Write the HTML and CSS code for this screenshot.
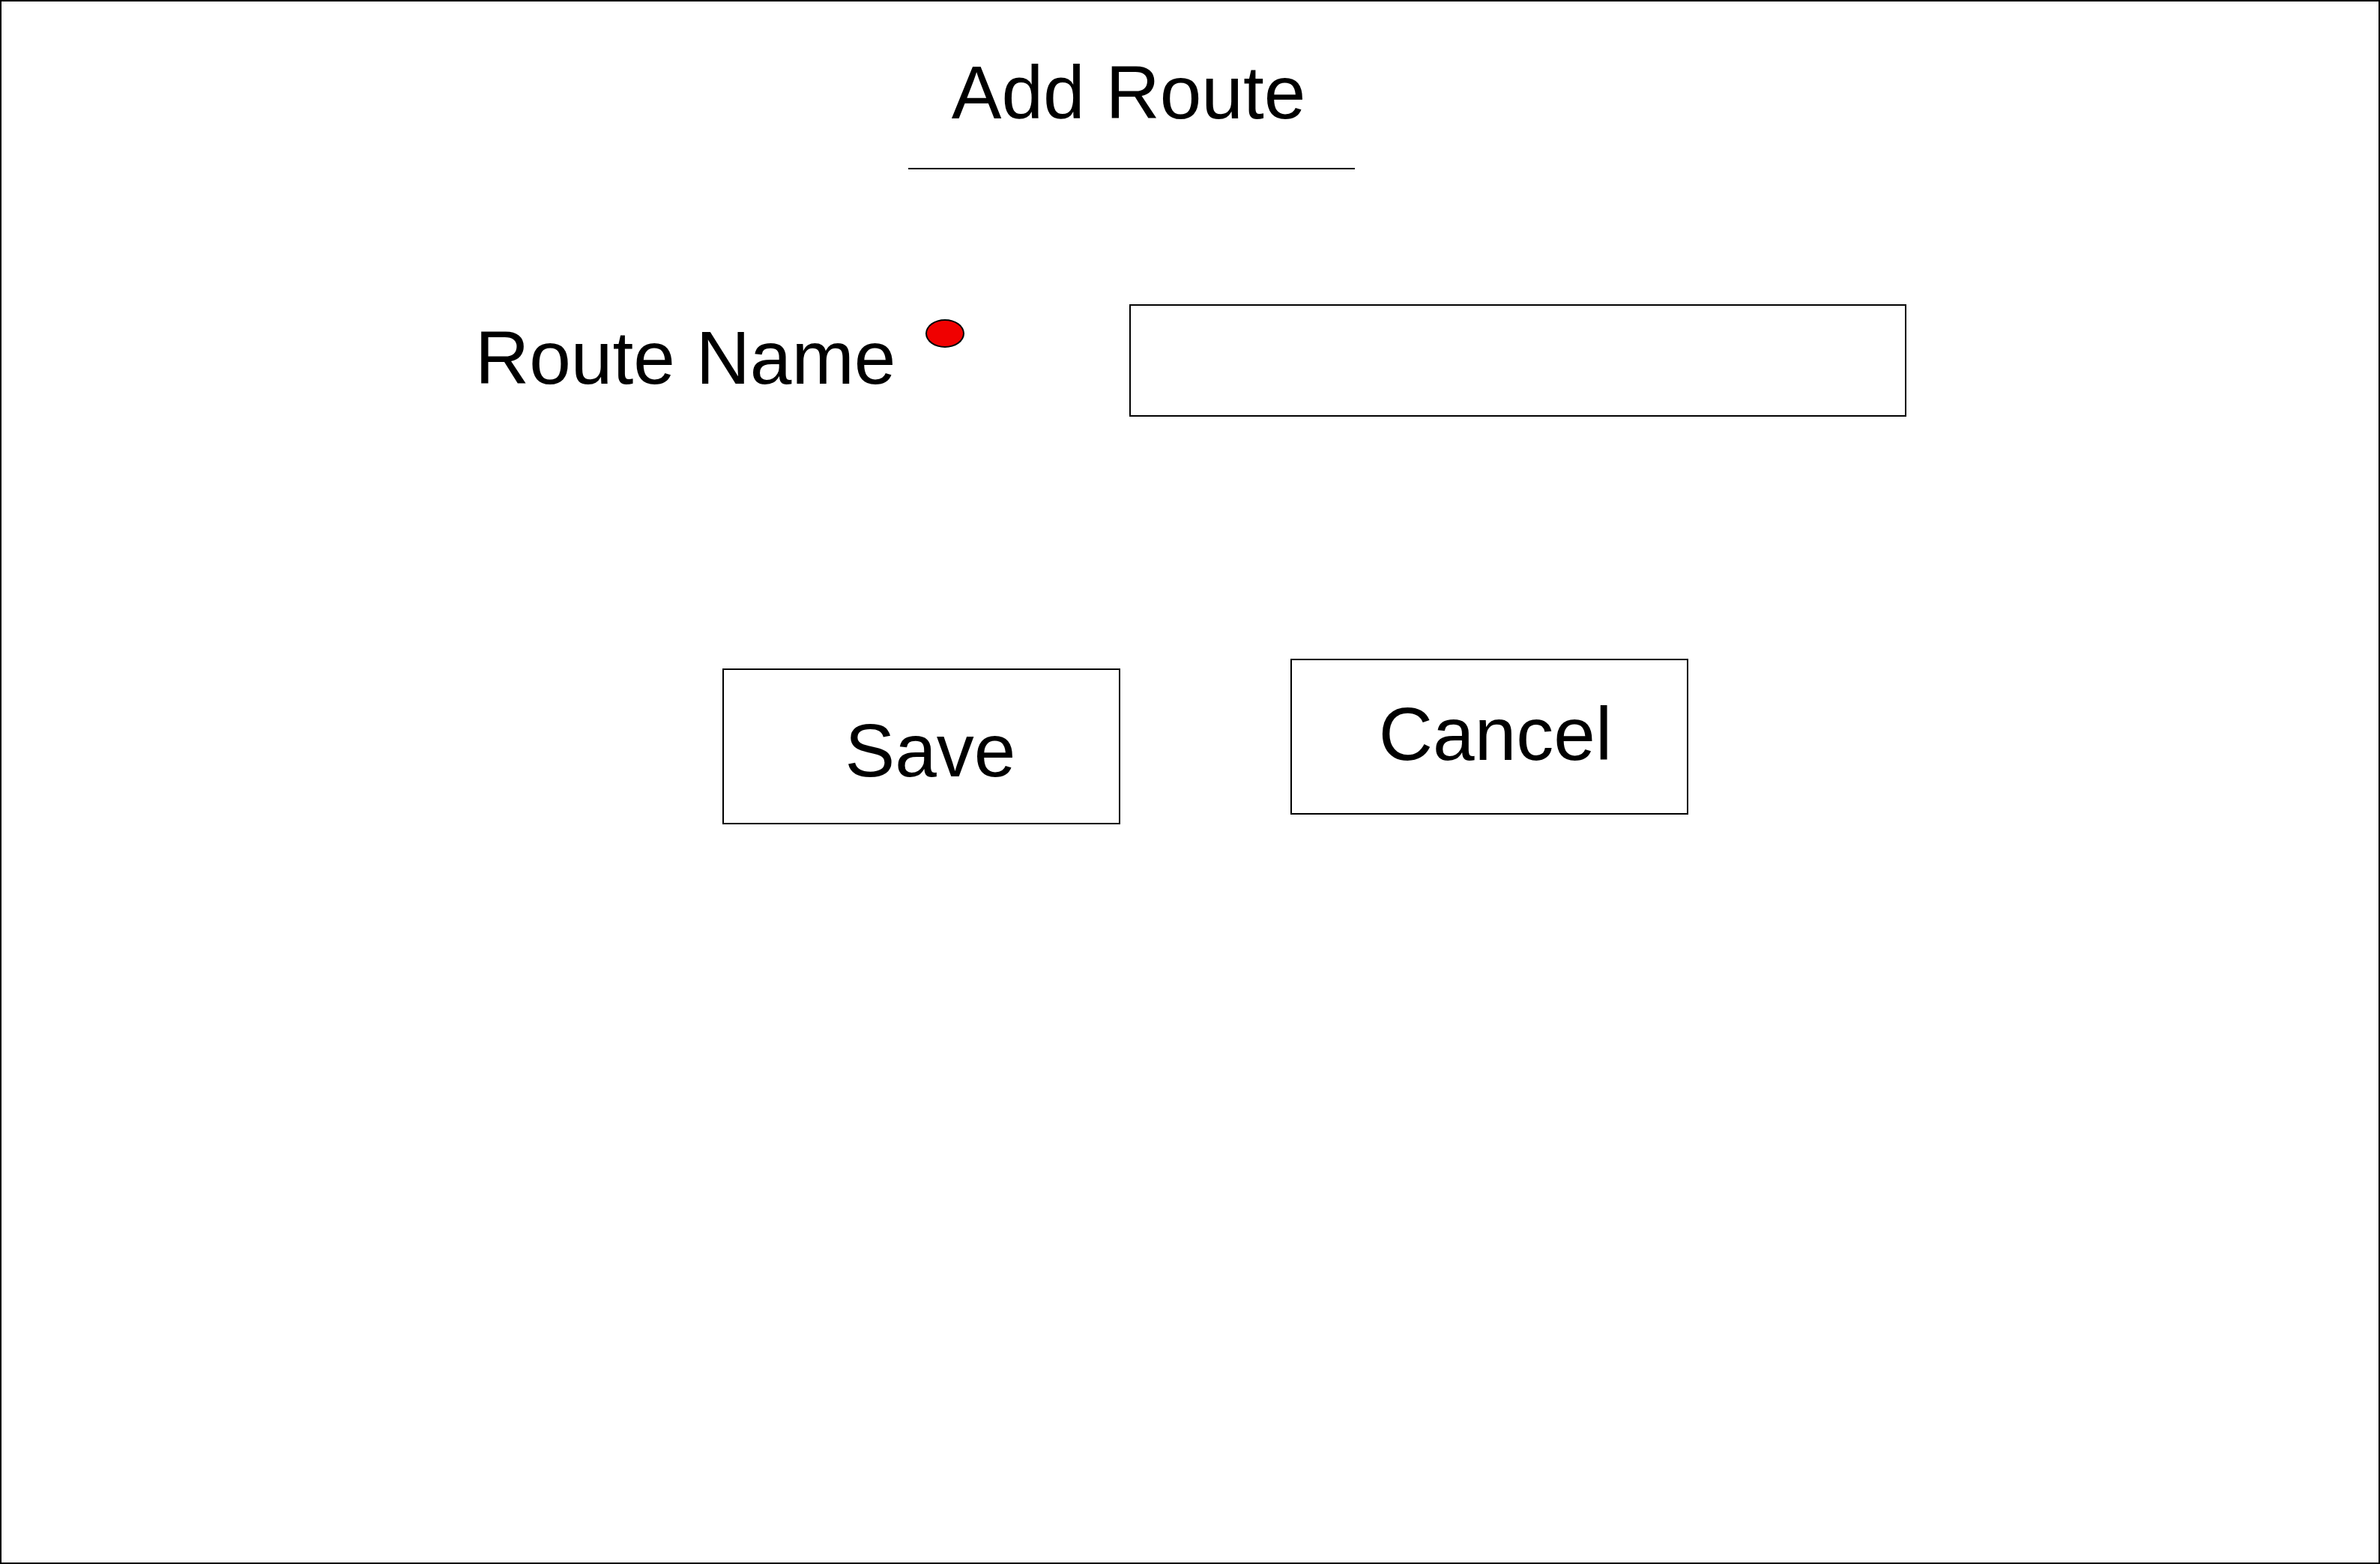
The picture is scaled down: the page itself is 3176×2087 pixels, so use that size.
FILE: index.html
```html
<!DOCTYPE html>
<html lang="en">
<head>
  <meta charset="utf-8">
  <meta name="viewport" content="width=device-width, initial-scale=1">
  <title>Add Route</title>
  <link rel="stylesheet" href="styles.css">
</head>
<body>
  <main class="page">
    <header class="page-header">
      <h1 class="title">Add Route</h1>
    </header>
    <form class="route-form">
      <div class="field">
        <div class="field-label">
          <label for="route-name">Route Name</label>
          <span class="required-dot"></span>
        </div>
        <input class="field-input" id="route-name" name="route-name" type="text" required>
      </div>
      <div class="actions">
        <button class="button button-save" type="submit">Save</button>
        <button class="button button-cancel" type="button">Cancel</button>
      </div>
    </form>
  </main>
</body>
</html>
```
FILE: styles.css
```css
* {
  box-sizing: border-box;
}

body {
  margin: 0;
  background: #fff;
  color: #000;
  font: 100px/120px "Liberation Sans", Arial, sans-serif;
}

.page {
  min-height: 100vh;
  border: 2px solid #000;
}

.page-header {
  display: grid;
  grid-template-columns: 1210fr 596px 1366fr;
  padding-top: 61px;
}

.title {
  grid-column: 2;
  margin: 0;
  padding: 0 8px 41px 0;
  border-bottom: 2px solid #000;
  font: inherit;
  text-align: center;
  white-space: nowrap;
}

.field {
  display: grid;
  grid-template-columns: 632fr 873px 1037px 630fr;
  padding-top: 180px;
}

.field-label {
  grid-column: 2;
  display: flex;
  align-items: flex-start;
  gap: 40px;
  padding-top: 11px;
  white-space: nowrap;
}

.required-dot {
  width: 52px;
  height: 38px;
  margin-top: 9px;
  border: 2px solid #000;
  border-radius: 50%;
  background: #f00000;
}

.field-input {
  width: 100%;
  height: 150px;
  padding: 0 24px;
  border: 2px solid #000;
  border-radius: 0;
  background: #fff;
  color: inherit;
  font: inherit;
}

.actions {
  display: grid;
  grid-template-columns: 962fr 531px 227px 531px 921fr;
  align-items: start;
  padding-top: 323px;
}

.button {
  height: 208px;
  border: 2px solid #000;
  border-radius: 0;
  background: #fff;
  color: inherit;
  font: inherit;
  cursor: pointer;
}

.button-save {
  grid-column: 2;
  margin-top: 13px;
  padding: 10px 0 0 24px;
}

.button-cancel {
  grid-column: 4;
  padding: 0 0 8px 16px;
}
```
